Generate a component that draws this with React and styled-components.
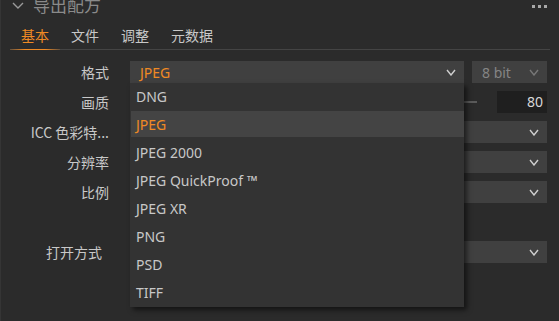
import React from "react";
import styled, { createGlobalStyle } from "styled-components";

const GlobalStyle = createGlobalStyle`
  html, body {
    margin: 0;
    padding: 0;
    background: #2b2b2b;
  }
  body {
    font-family: "Noto Sans", "Noto Sans CJK SC", sans-serif;
  }
`;

const Panel = styled.div`
  width: 559px;
  height: 321px;
  overflow: hidden;
  background: #2b2b2b;
  border-left: 1px solid #353535;
  box-sizing: border-box;
  display: flex;
  flex-direction: column;
`;

const Header = styled.div`
  display: flex;
  align-items: center;
  height: 16px;
  margin-top: -3px;
  padding: 0 12px 0 11px;
`;

const Title = styled.span`
  font-family: "Noto Sans CJK SC", sans-serif;
  font-size: 17px;
  color: #8a8a8a;
  margin-left: 9px;
  line-height: 16px;
`;

const Dots = styled.div`
  margin-left: auto;
  display: flex;
  gap: 3px;
  margin-top: 3px;
  span {
    width: 3px;
    height: 3px;
    background: #a8a8a8;
  }
`;

const Tabs = styled.div`
  display: flex;
  margin: 12px 9px 0 9px;
  border-bottom: 1px solid #444;
`;

const Tab = styled.div`
  position: relative;
  padding: 0 11px 4px 11px;
  font-family: "Noto Sans CJK SC", sans-serif;
  font-size: 14px;
  line-height: 20px;
  color: ${(p) => (p.$active ? "#f08a24" : "#c8c8c8")};
  &::after {
    content: "";
    display: ${(p) => (p.$active ? "block" : "none")};
    position: absolute;
    left: 0;
    right: 0;
    bottom: -1px;
    height: 1px;
    background: linear-gradient(90deg, rgba(240, 138, 36, 0.2), #f08a24 30%, #f08a24 70%, rgba(240, 138, 36, 0.2));
  }
`;

const Form = styled.div`
  display: flex;
  flex-direction: column;
  gap: 8px;
  padding: 11px 12px 0 0;
`;

const Row = styled.div`
  display: grid;
  grid-template-columns: 108px 1fr;
  column-gap: 21px;
  align-items: center;
  height: 22px;
`;

const Spacer = styled.div`
  height: 22px;
`;

const Label = styled.div`
  text-align: right;
  padding-right: ${(p) => p.$inset || 0}px;
  font-family: "Noto Sans CJK SC", sans-serif;
  font-size: 14px;
  color: #c8c8c8;
  white-space: nowrap;
`;

const Controls = styled.div`
  display: flex;
  align-items: center;
  gap: ${(p) => p.$gap || 8}px;
  height: 22px;
`;

const Select = styled.div`
  position: relative;
  flex: ${(p) => (p.$width ? `0 0 ${p.$width}px` : "1")};
  height: 22px;
  background: #404040;
  display: flex;
  align-items: center;
  padding: 0 8px 0 10px;
  box-sizing: border-box;
  font-size: 14px;
  color: ${(p) => p.$color || "#c8c8c8"};
`;

const Value = styled.span`
  flex: 1;
`;

const Track = styled.div`
  flex: 1;
  height: 2px;
  background: #5a5a5a;
`;

const NumberBox = styled.div`
  flex: 0 0 50px;
  height: 22px;
  background: #1f1f1f;
  box-sizing: border-box;
  padding-right: 4px;
  text-align: right;
  font-size: 14px;
  line-height: 22px;
  color: #d8d8d8;
`;

const Menu = styled.div`
  position: absolute;
  top: 100%;
  left: 0;
  width: 334px;
  background: #333333;
  box-shadow: 3px 3px 5px rgba(0, 0, 0, 0.55);
  z-index: 10;
`;

const Item = styled.div`
  height: 28px;
  box-sizing: border-box;
  display: flex;
  align-items: center;
  padding: 0 0 1px 5px;
  margin-left: 1px;
  font-size: 14px;
  color: ${(p) => (p.$active ? "#f08a24" : "#c8c8c8")};
  background: ${(p) => (p.$active ? "#444444" : "transparent")};
  box-shadow: ${(p) => (p.$active ? "inset 0 -2px 0 #333" : "none")};
`;

const Chevron = ({ color = "#cfcfcf", w = 8, h = 5 }) => (
  <svg width={w + 2} height={h + 2} viewBox={`-1 -1 ${w + 2} ${h + 2}`}>
    <polyline
      points={`0,0 ${w / 2},${h} ${w},0`}
      fill="none"
      stroke={color}
      strokeWidth="1.4"
    />
  </svg>
);

const formats = ["DNG", "JPEG", "JPEG 2000", "JPEG QuickProof ™", "JPEG XR", "PNG", "PSD", "TIFF"];

export default function App() {
  return (
    <>
      <GlobalStyle />
      <Panel>
        <Header>
          <Chevron color="#9a9a9a" w={10} h={5} />
          <Title>导出配方</Title>
          <Dots>
            <span />
            <span />
            <span />
          </Dots>
        </Header>

        <Tabs>
          <Tab $active>基本</Tab>
          <Tab>文件</Tab>
          <Tab>调整</Tab>
          <Tab>元数据</Tab>
        </Tabs>

        <Form>
          <Row>
            <Label>格式</Label>
            <Controls>
              <Select $color="#f08a24">
                <Value>JPEG</Value>
                <Chevron />
                <Menu>
                  {formats.map((f) => (
                    <Item key={f} $active={f === "JPEG"}>
                      {f}
                    </Item>
                  ))}
                </Menu>
              </Select>
              <Select $width={75} $color="#858585">
                <Value>8 bit</Value>
                <Chevron color="#777" />
              </Select>
            </Controls>
          </Row>
          <Row>
            <Label>画质</Label>
            <Controls $gap={20}>
              <Track />
              <NumberBox>80</NumberBox>
            </Controls>
          </Row>
          <Row>
            <Label>ICC 色彩特...</Label>
            <Controls>
              <Select>
                <Value />
                <Chevron />
              </Select>
            </Controls>
          </Row>
          <Row>
            <Label>分辨率</Label>
            <Controls>
              <Select>
                <Value />
                <Chevron />
              </Select>
            </Controls>
          </Row>
          <Row>
            <Label>比例</Label>
            <Controls>
              <Select>
                <Value />
                <Chevron />
              </Select>
            </Controls>
          </Row>
          <Spacer />
          <Row>
            <Label $inset={7}>打开方式</Label>
            <Controls>
              <Select>
                <Value />
                <Chevron />
              </Select>
            </Controls>
          </Row>
        </Form>
      </Panel>
    </>
  );
}
